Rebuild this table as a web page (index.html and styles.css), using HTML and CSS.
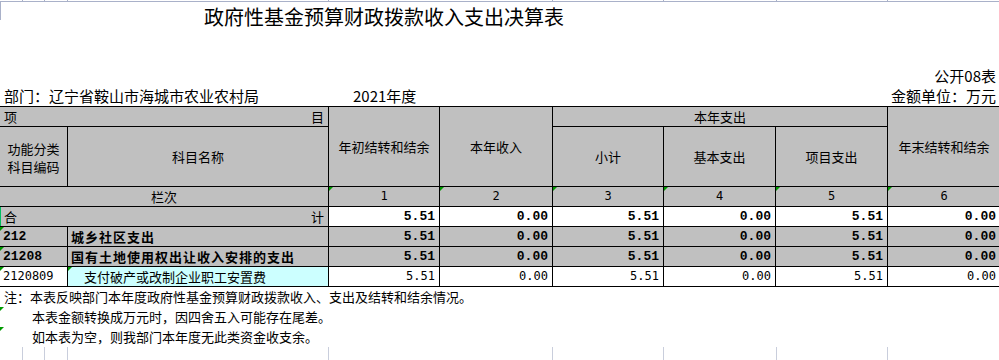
FILE: index.html
```html
<!DOCTYPE html>
<html lang="zh-CN">
<head>
<meta charset="utf-8">
<title>政府性基金预算财政拨款收入支出决算表</title>
<link rel="stylesheet" href="styles.css">
</head>
<body>
<div class="ticks top-ticks"><span></span><span></span><span></span><span></span><span></span><span></span><span></span><span></span><span></span></div>
<div class="top-line"></div>
<div class="title-row">
  <div class="edge"></div>
  <h1 class="title">政府性基金预算财政拨款收入支出决算表</h1>
</div>
<div class="meta-right">公开08表</div>
<div class="dept">
  <span class="dept-name">部门：辽宁省鞍山市海城市农业农村局</span>
  <span class="dept-year">2021年度</span>
  <span class="dept-unit">金额单位：万元</span>
</div>

<div class="table">
  <div class="c h split r1 span2c"><span>项</span><span>目</span></div>
  <div class="c h span2r">年初结转和结余</div>
  <div class="c h span2r">本年收入</div>
  <div class="c h span3c">本年支出</div>
  <div class="c h span2r">年末结转和结余</div>

  <div class="c h code-h"><div class="stack"><span>功能分类</span><span>科目编码</span></div></div>
  <div class="c h">科目名称</div>
  <div class="c h">小计</div>
  <div class="c h">基本支出</div>
  <div class="c h">项目支出</div>

  <div class="c h span2c">栏次</div>
  <div class="c h num-h mk">1</div>
  <div class="c h num-h mk">2</div>
  <div class="c h num-h mk">3</div>
  <div class="c h num-h mk">4</div>
  <div class="c h num-h mk">5</div>
  <div class="c h num-h mk">6</div>

  <div class="c h split span2c total"><span>合</span><span>计</span></div>
  <div class="c n b">5.51</div>
  <div class="c n b">0.00</div>
  <div class="c n b">5.51</div>
  <div class="c n b">0.00</div>
  <div class="c n b">5.51</div>
  <div class="c n b">0.00</div>

  <div class="c g code b mk">212</div>
  <div class="c g name bt">城乡社区支出</div>
  <div class="c g n b">5.51</div>
  <div class="c g n b">0.00</div>
  <div class="c g n b">5.51</div>
  <div class="c g n b">0.00</div>
  <div class="c g n b">5.51</div>
  <div class="c g n b">0.00</div>

  <div class="c g code b mk">21208</div>
  <div class="c g name bt">国有土地使用权出让收入安排的支出</div>
  <div class="c g n b">5.51</div>
  <div class="c g n b">0.00</div>
  <div class="c g n b">5.51</div>
  <div class="c g n b">0.00</div>
  <div class="c g n b">5.51</div>
  <div class="c g n b">0.00</div>

  <div class="c code plain mk">2120809</div>
  <div class="c cyan sub mk">支付破产或改制企业职工安置费</div>
  <div class="c n">5.51</div>
  <div class="c n">0.00</div>
  <div class="c n">5.51</div>
  <div class="c n">0.00</div>
  <div class="c n">5.51</div>
  <div class="c n">0.00</div>
</div>

<div class="notes">
  <div class="note first">注：本表反映部门本年度政府性基金预算财政拨款收入、支出及结转和结余情况。</div>
  <div class="note indent mk">本表金额转换成万元时，因四舍五入可能存在尾差。</div>
  <div class="note indent mk">如本表为空，则我部门本年度无此类资金收支余。</div>
</div>
<div class="ticks bottom-ticks"><span></span><span></span><span></span><span></span><span></span><span></span><span></span><span></span><span></span></div>
</body>
</html>
```

FILE: styles.css
```css
html, body {
  margin: 0;
  padding: 0;
  overflow: hidden;
  background: #fff;
}
body {
  width: 999px;
  height: 360px;
  font-family: "Noto Sans CJK SC", sans-serif;
  color: #000;
}

/* faint spreadsheet gridlines */
.ticks {
  display: grid;
  grid-template-columns: 23px 22px 23px 261px 224px 111px 113px 111px 1fr;
}
.ticks span {
  box-sizing: border-box;
  border-right: 1px solid #a9b1c9;
}
.ticks span:last-child { border-right: none; }
.top-ticks { height: 1px; }
.bottom-ticks { height: 14px; }
.bottom-ticks span { border-right-color: #c9cedc; }
.top-line {
  height: 1px;
  background: #a9b1c9;
}

.title-row {
  display: flex;
  height: 64px;
}
.edge {
  width: 1px;
  height: 18px;
  background: #a9b1c9;
  flex: none;
}
.title {
  margin: 5px 0 0 203px;
  font-size: 20px;
  line-height: 20px;
  font-weight: normal;
  white-space: nowrap;
}

.meta-right {
  height: 20px;
  line-height: 20px;
  font-size: 15px;
  text-align: right;
  padding-right: 3px;
}
.dept {
  display: flex;
  height: 20px;
  line-height: 20px;
  font-size: 15px;
  padding: 0 3px 0 4px;
  white-space: nowrap;
}
.dept-name { width: 349px; flex: none; }
.dept-year { flex: 1; }

/* table */
.table {
  display: grid;
  width: 1001px;
  grid-template-columns: 68px 261px 111px 113px 111px 112px 112px 113px;
  grid-template-rows: 20px 60px 20px 20px 20px 20px 20px;
  border-top: 1px solid #000;
  font-size: 13px;
}
.c {
  position: relative;
  box-sizing: border-box;
  border-right: 1px solid #000;
  border-bottom: 1px solid #000;
  display: flex;
  align-items: center;
  overflow: hidden;
  white-space: nowrap;
  line-height: 15px;
}
.h {
  background: #c0c0c0;
  justify-content: center;
  text-align: center;
}
.span2c { grid-column: span 2; }
.span3c { grid-column: span 3; }
.span2r { grid-row: span 2; }
.split {
  justify-content: space-between;
  padding: 0 4px;
}
.total { box-shadow: inset 1px 0 0 #00c060; }
.stack {
  display: flex;
  flex-direction: column;
  gap: 0;
  line-height: 18px;
  margin-top: 3px;
}
.num-h { font-family: "DejaVu Sans Mono", monospace; font-size: 12px; }

.g { background: #c0c0c0; }
.cyan { background: #ccffff; }
.n {
  justify-content: flex-end;
  padding-right: 4px;
  font-family: "DejaVu Sans Mono", monospace;
  font-size: 12px;
}
.n.b {
  font-family: "Liberation Mono", monospace;
  font-size: 13px;
  font-weight: bold;
}
.code {
  padding-left: 3px;
  font-family: "Liberation Mono", monospace;
  font-size: 13px;
}
.code.b { font-weight: bold; }
.code.plain {
  font-family: "DejaVu Sans Mono", monospace;
  font-size: 12px;
}
.name { padding-left: 3px; }
.bt { font-weight: bold; letter-spacing: 1px; }
.sub { padding-left: 16px; }

/* green error-indicator triangles */
.mk::before {
  content: "";
  position: absolute;
  left: 0;
  top: 0;
  border-top: 4px solid #009a00;
  border-right: 4px solid transparent;
}

.notes { font-size: 13px; }
.note {
  position: relative;
  height: 20px;
  line-height: 20px;
  white-space: nowrap;
}
.note.first { padding-left: 4px; }
.note.indent { padding-left: 32px; }
```
